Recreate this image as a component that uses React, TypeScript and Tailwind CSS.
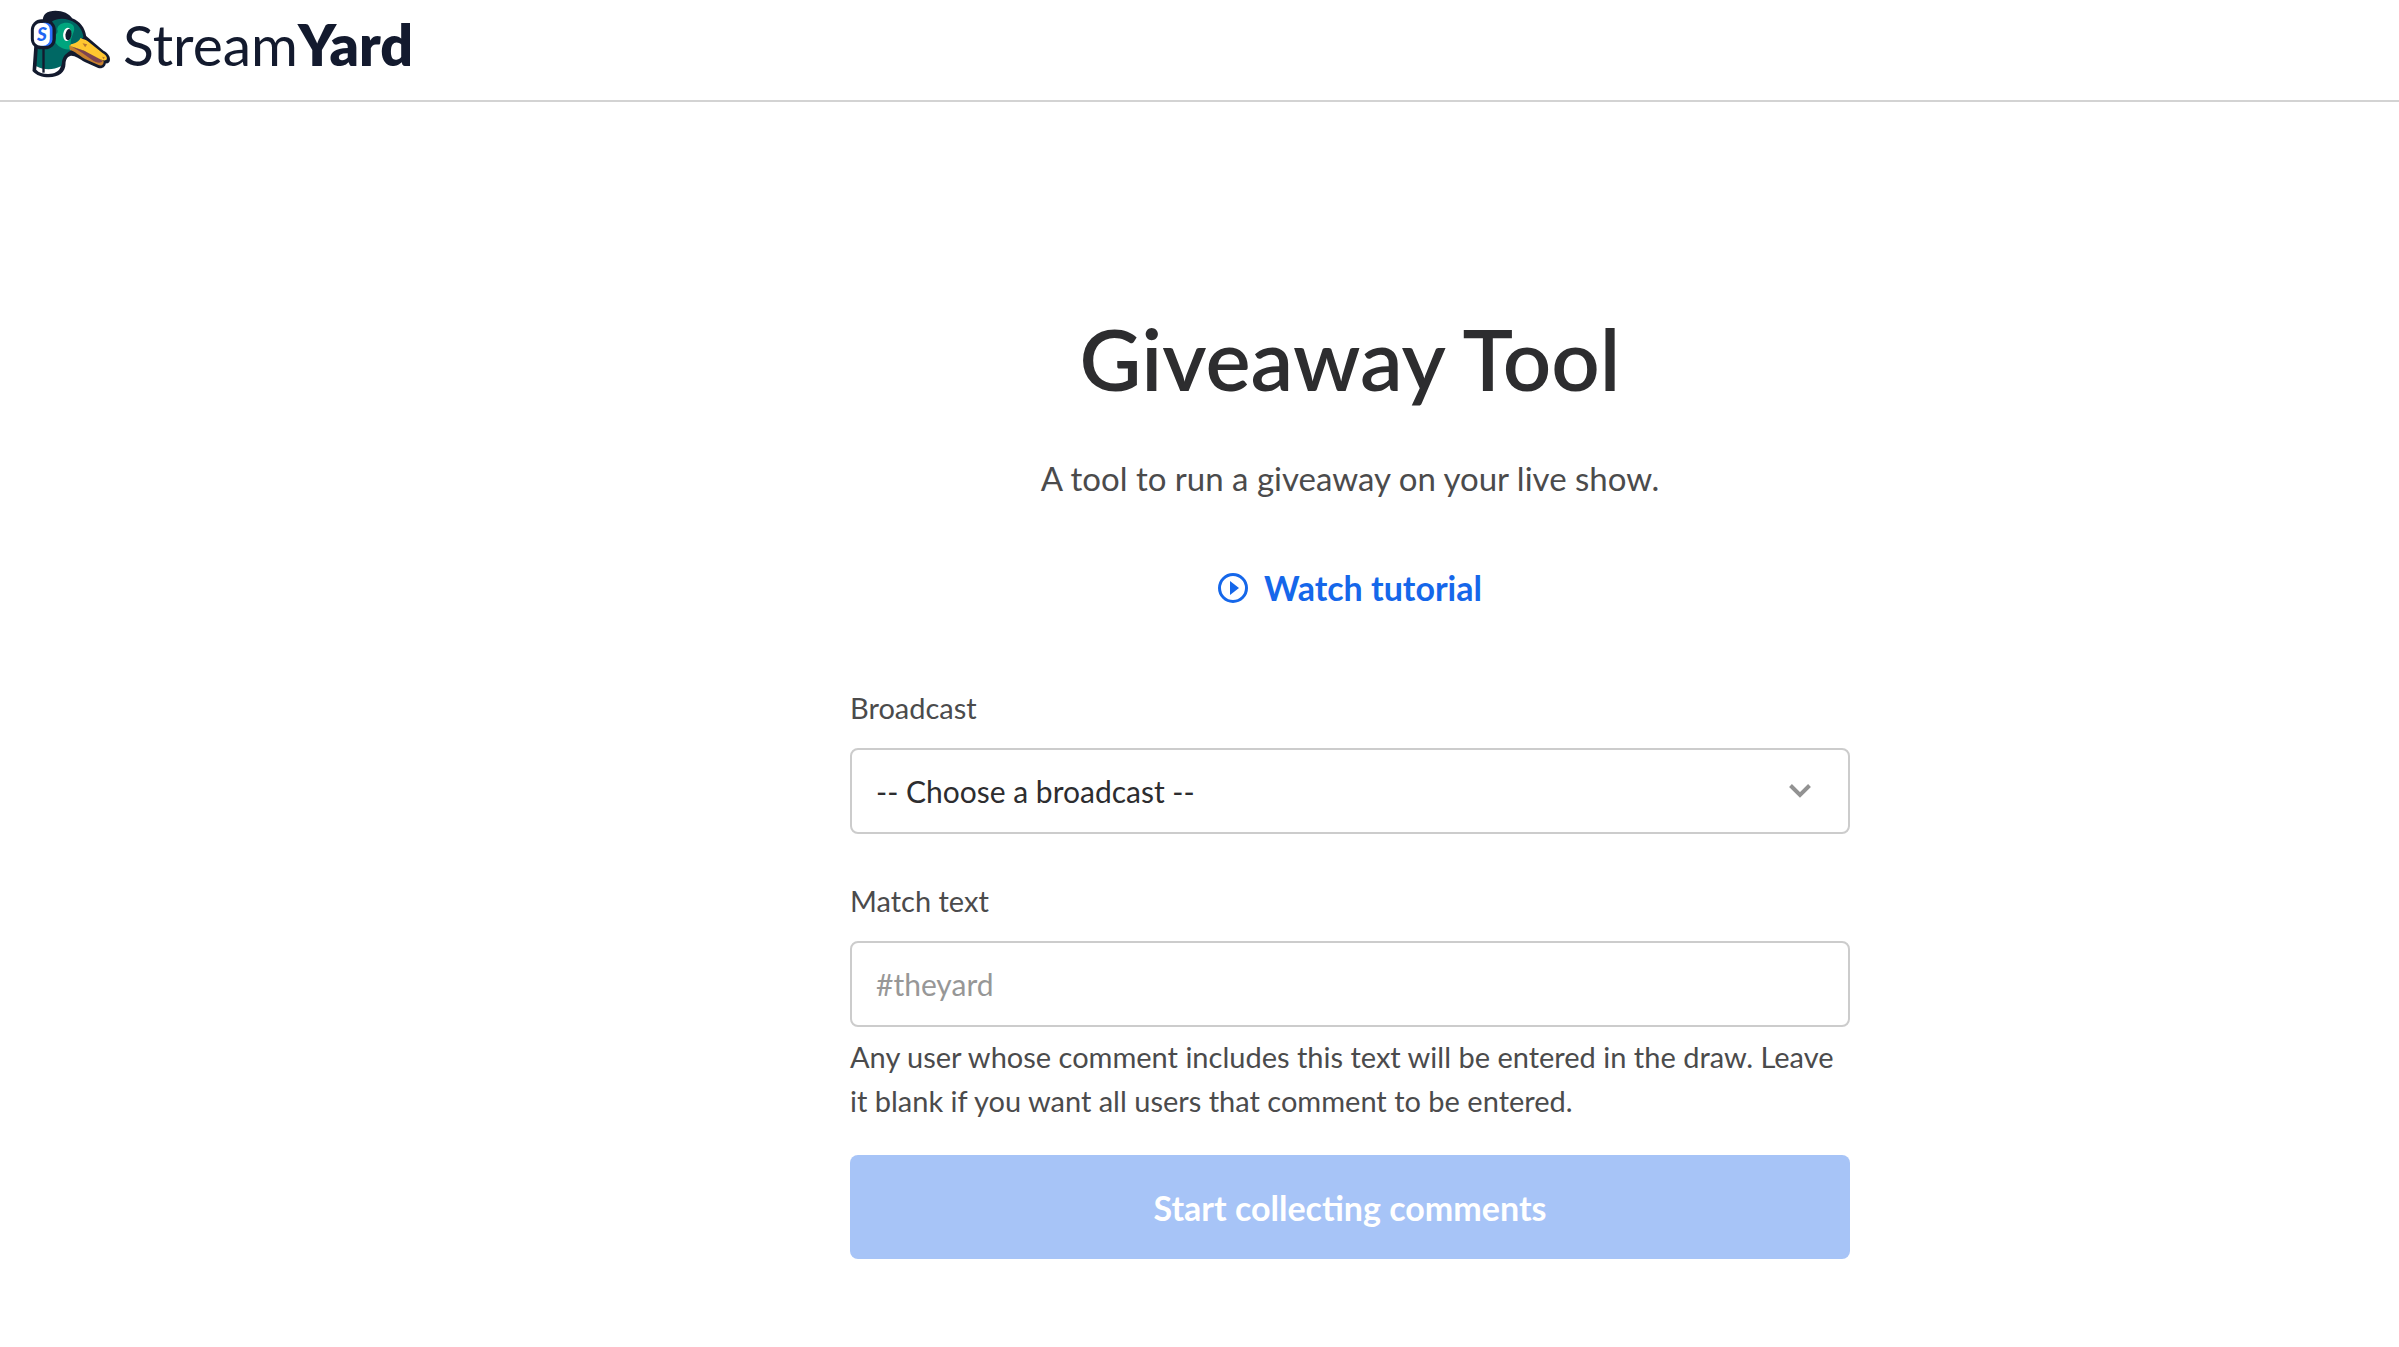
function DuckLogo() {
  return (
    <svg viewBox="30 28 242 204" className="h-[68px] w-[81px] shrink-0" aria-hidden="true">
      <path
        d="M68 62C66 42 80 30 106 30C128 30 148 39 156 53C180 62 194 82 198 106L250 150C262 156 272 168 269 180C267 187 262 189 257 188C256 198 246 206 234 202L194 184C178 174 164 164 152 165C142 168 136 176 136 190C136 214 116 230 86 230C66 230 48 224 37 211L42 140L68 62Z"
        fill="#131a2e"
      />
      <path
        d="M96 62C114 50 146 52 166 68C182 80 188 96 190 110L152 150C138 156 126 168 125 188C124 198 120 202 114 204C98 210 68 208 49 197L53 140L96 120Z"
        fill="#006864"
      />
      <path
        d="M111 86C112 72 126 65 142 66C156 67 164 76 162 88L152 118L150 146C132 150 112 138 104 122L108 100C112 98 114 92 111 86Z"
        fill="#00a67e"
      />
      <path d="M49 197C68 208 98 210 122 197C118 213 102 220 84 220C68 220 56 216 48 207Z" fill="#ffffff" />
      <path d="M70 140V216" stroke="#131a2e" strokeWidth="7" fill="none" />
      <ellipse cx="141" cy="101" rx="12" ry="20" fill="#ffffff" transform="rotate(8 141 101)" />
      <ellipse cx="145" cy="102" rx="9" ry="17" fill="#131a2e" transform="rotate(8 145 102)" />
      <path d="M147 134L250 180C252 190 246 196 237 194L196 176C178 166 162 150 149 148Z" fill="#c8812e" />
      <path d="M156 139C190 146 232 166 247 182C240 190 228 186 216 178C198 166 178 150 156 139Z" fill="#7d4350" />
      <path
        d="M152 131C164 128 176 124 181 112C190 116 198 118 202 121L246 156C256 162 262 168 260 175C258 181 248 180 240 176L192 150L150 136Z"
        fill="#ffc72f"
      />
      <path d="M187 128L201 131L195 140Z" fill="#b9772f" />
      <path d="M246 168L254 170L250 176Z" fill="#b9772f" />
      <rect x="32" y="56" width="75" height="90" rx="32" fill="#131a2e" />
      <rect x="50" y="66" width="47" height="70" rx="20" fill="#2b6fff" />
      <rect x="41" y="67" width="48" height="68" rx="20" fill="#ffffff" />
      <text
        x="65"
        y="121"
        textAnchor="middle"
        fontSize="57"
        className="fill-[#1f66f2] font-['Lato'] font-black italic"
      >
        S
      </text>
    </svg>
  );
}

function PlayIcon() {
  return (
    <svg viewBox="0 0 30 30" className="size-[30px] shrink-0" aria-hidden="true">
      <circle cx="15" cy="15" r="13.5" fill="none" stroke="currentColor" strokeWidth="3" />
      <path d="M12 8L21 15L12 22Z" fill="currentColor" />
    </svg>
  );
}

const fieldClass =
  "h-[86px] w-full appearance-none rounded-lg border-2 border-[#cccccc] bg-white px-6 text-[30px] outline-none focus:border-[#1567ea]";

export default function App() {
  return (
    <div className="min-h-screen bg-white font-['Lato',sans-serif] text-[#4b4b4c]">
      <header className="border-b-2 border-[#d3d3d3] px-[30px] pt-[10px] pb-[22px]">
        <a href="#" aria-label="StreamYard" className="flex w-fit items-center gap-3">
          <DuckLogo />
          <span className="text-[57px] leading-[64px] text-[#131a2e]">
            Stream<span className="font-extrabold">Yard</span>
          </span>
        </a>
      </header>

      <main className="pt-[206px] pl-[301px]">
        <div className="mx-auto flex w-full max-w-[1000px] flex-col">
          <div className="flex flex-col items-center text-center">
            <h1 className="text-[85px] leading-[100px] font-semibold text-[#2d2d2f]">Giveaway Tool</h1>
            <p className="mt-[46px] text-[33px] leading-[48px]">A tool to run a giveaway on your live show.</p>
            <a
              href="#"
              className="mt-[62px] flex items-center gap-4 text-[34px] leading-[48px] font-bold text-[#1567ea]"
            >
              <PlayIcon />
              Watch tutorial
            </a>
          </div>

          <form className="mt-[74px] flex flex-col" onSubmit={(e) => e.preventDefault()}>
            <label htmlFor="broadcast" className="text-[29px] leading-[44px]">
              Broadcast
            </label>
            <div className="relative mt-[18px]">
              <select id="broadcast" defaultValue="" className={fieldClass + " block text-[#2d2d2f]"}>
                <option value="">-- Choose a broadcast --</option>
              </select>
              <svg
                viewBox="0 0 22 14"
                className="pointer-events-none absolute top-[36px] right-[39px] h-[14px] w-[22px]"
                aria-hidden="true"
              >
                <path d="M1.5 1.5L11 11L20.5 1.5" fill="none" stroke="#929292" strokeWidth="4" />
              </svg>
            </div>

            <label htmlFor="match" className="mt-[45px] text-[29px] leading-[44px]">
              Match text
            </label>
            <input
              id="match"
              type="text"
              placeholder="#theyard"
              aria-describedby="match-help"
              className={fieldClass + " mt-[18px] text-[#2d2d2f] placeholder:text-[#979797]"}
            />
            <p id="match-help" className="mt-[8px] text-[29px] leading-[44px]">
              Any user whose comment includes this text will be entered in the draw. Leave it blank if you want all
              users that comment to be entered.
            </p>
            <button
              type="submit"
              disabled
              className="mt-[32px] h-[104px] w-full rounded-lg bg-[#a7c4f7] text-[34px] font-bold text-white"
            >
              Start collecting comments
            </button>
          </form>
        </div>
      </main>
    </div>
  );
}
